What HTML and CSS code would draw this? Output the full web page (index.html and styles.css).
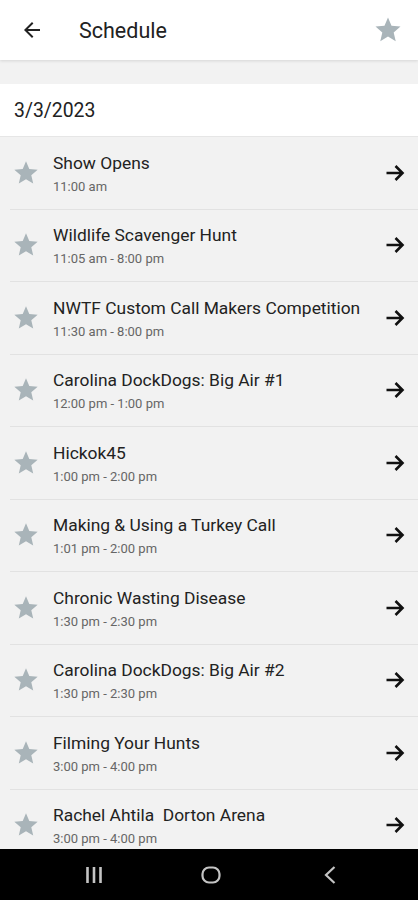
FILE: index.html
```html
<!DOCTYPE html>
<html lang="en">
<head>
  <meta charset="UTF-8">
  <meta name="viewport" content="width=device-width, initial-scale=1.0">
  <title>Schedule</title>
  <link rel="stylesheet" href="styles.css">
</head>
<body>
  <header class="topbar">
    <svg class="back" viewBox="0 0 24 24" width="24" height="24"><path d="M20 11H7.83l5.59-5.59L12 4l-8 8 8 8 1.41-1.41L7.83 13H20v-2z" fill="#222"/></svg>
    <h1>Schedule</h1>
    <svg class="fav" viewBox="0 0 24 24" width="30" height="30"><path d="M12 17.27L18.18 21l-1.64-7.03L22 9.24l-7.19-.61L12 2 9.19 8.63 2 9.24l5.46 4.73L5.82 21z" fill="#a9b4b9"/></svg>
  </header>

  <div class="spacer"></div>

  <div class="date">3/3/2023</div>

  <ul class="events">
    <li class="event">
      <svg class="star" viewBox="0 0 24 24"><path d="M12 17.27L18.18 21l-1.64-7.03L22 9.24l-7.19-.61L12 2 9.19 8.63 2 9.24l5.46 4.73L5.82 21z"/></svg>
      <div class="info"><div class="name">Show Opens</div><div class="time">11:00 am</div></div>
      <svg class="go" viewBox="0 0 20 20"><path d="M1.5 10H17M10.5 3l7 7-7 7"/></svg>
    </li>
    <li class="event">
      <svg class="star" viewBox="0 0 24 24"><path d="M12 17.27L18.18 21l-1.64-7.03L22 9.24l-7.19-.61L12 2 9.19 8.63 2 9.24l5.46 4.73L5.82 21z"/></svg>
      <div class="info"><div class="name">Wildlife Scavenger Hunt</div><div class="time">11:05 am - 8:00 pm</div></div>
      <svg class="go" viewBox="0 0 20 20"><path d="M1.5 10H17M10.5 3l7 7-7 7"/></svg>
    </li>
    <li class="event">
      <svg class="star" viewBox="0 0 24 24"><path d="M12 17.27L18.18 21l-1.64-7.03L22 9.24l-7.19-.61L12 2 9.19 8.63 2 9.24l5.46 4.73L5.82 21z"/></svg>
      <div class="info"><div class="name">NWTF Custom Call Makers Competition</div><div class="time">11:30 am - 8:00 pm</div></div>
      <svg class="go" viewBox="0 0 20 20"><path d="M1.5 10H17M10.5 3l7 7-7 7"/></svg>
    </li>
    <li class="event">
      <svg class="star" viewBox="0 0 24 24"><path d="M12 17.27L18.18 21l-1.64-7.03L22 9.24l-7.19-.61L12 2 9.19 8.63 2 9.24l5.46 4.73L5.82 21z"/></svg>
      <div class="info"><div class="name">Carolina DockDogs: Big Air #1</div><div class="time">12:00 pm - 1:00 pm</div></div>
      <svg class="go" viewBox="0 0 20 20"><path d="M1.5 10H17M10.5 3l7 7-7 7"/></svg>
    </li>
    <li class="event">
      <svg class="star" viewBox="0 0 24 24"><path d="M12 17.27L18.18 21l-1.64-7.03L22 9.24l-7.19-.61L12 2 9.19 8.63 2 9.24l5.46 4.73L5.82 21z"/></svg>
      <div class="info"><div class="name">Hickok45</div><div class="time">1:00 pm - 2:00 pm</div></div>
      <svg class="go" viewBox="0 0 20 20"><path d="M1.5 10H17M10.5 3l7 7-7 7"/></svg>
    </li>
    <li class="event">
      <svg class="star" viewBox="0 0 24 24"><path d="M12 17.27L18.18 21l-1.64-7.03L22 9.24l-7.19-.61L12 2 9.19 8.63 2 9.24l5.46 4.73L5.82 21z"/></svg>
      <div class="info"><div class="name">Making &amp; Using a Turkey Call</div><div class="time">1:01 pm - 2:00 pm</div></div>
      <svg class="go" viewBox="0 0 20 20"><path d="M1.5 10H17M10.5 3l7 7-7 7"/></svg>
    </li>
    <li class="event">
      <svg class="star" viewBox="0 0 24 24"><path d="M12 17.27L18.18 21l-1.64-7.03L22 9.24l-7.19-.61L12 2 9.19 8.63 2 9.24l5.46 4.73L5.82 21z"/></svg>
      <div class="info"><div class="name">Chronic Wasting Disease</div><div class="time">1:30 pm - 2:30 pm</div></div>
      <svg class="go" viewBox="0 0 20 20"><path d="M1.5 10H17M10.5 3l7 7-7 7"/></svg>
    </li>
    <li class="event">
      <svg class="star" viewBox="0 0 24 24"><path d="M12 17.27L18.18 21l-1.64-7.03L22 9.24l-7.19-.61L12 2 9.19 8.63 2 9.24l5.46 4.73L5.82 21z"/></svg>
      <div class="info"><div class="name">Carolina DockDogs: Big Air #2</div><div class="time">1:30 pm - 2:30 pm</div></div>
      <svg class="go" viewBox="0 0 20 20"><path d="M1.5 10H17M10.5 3l7 7-7 7"/></svg>
    </li>
    <li class="event">
      <svg class="star" viewBox="0 0 24 24"><path d="M12 17.27L18.18 21l-1.64-7.03L22 9.24l-7.19-.61L12 2 9.19 8.63 2 9.24l5.46 4.73L5.82 21z"/></svg>
      <div class="info"><div class="name">Filming Your Hunts</div><div class="time">3:00 pm - 4:00 pm</div></div>
      <svg class="go" viewBox="0 0 20 20"><path d="M1.5 10H17M10.5 3l7 7-7 7"/></svg>
    </li>
    <li class="event">
      <svg class="star" viewBox="0 0 24 24"><path d="M12 17.27L18.18 21l-1.64-7.03L22 9.24l-7.19-.61L12 2 9.19 8.63 2 9.24l5.46 4.73L5.82 21z"/></svg>
      <div class="info"><div class="name">Rachel Ahtila&nbsp; Dorton Arena</div><div class="time">3:00 pm - 4:00 pm</div></div>
      <svg class="go" viewBox="0 0 20 20"><path d="M1.5 10H17M10.5 3l7 7-7 7"/></svg>
    </li>
  </ul>

  <nav class="navbar">
    <svg viewBox="0 0 18 18" width="18" height="18"><path d="M2.5 1v16M9 1v16M15.5 1v16" stroke="#c4c4c4" stroke-width="2.6" fill="none"/></svg>
    <svg viewBox="0 0 20 18" width="20" height="18"><rect x="1.5" y="1.5" width="17" height="15" rx="6.5" stroke="#c4c4c4" stroke-width="2.2" fill="none"/></svg>
    <svg viewBox="0 0 14 20" width="14" height="20"><path d="M11.5 2L3 10l8.5 8" stroke="#c4c4c4" stroke-width="2.2" fill="none"/></svg>
  </nav>
</body>
</html>
```

FILE: styles.css
```css
body {
  margin: 0;
  font-family: Roboto, "Liberation Sans", sans-serif;
  background: #f2f2f2;
  color: #222;
  height: 900px;
  overflow: hidden;
  position: relative;
}
.topbar {
  height: 60px;
  background: #fff;
  display: flex;
  align-items: center;
  padding: 0 15px 0 20px;
  box-shadow: 0 1px 3px rgba(0, 0, 0, 0.12);
  position: relative;
}
.topbar h1 {
  flex: 1;
  margin: 0 0 0 35px;
  font-size: 21.5px;
  font-weight: 400;
  color: #222;
}
.spacer {
  height: 24px;
}
.date {
  height: 52px;
  background: #fff;
  display: flex;
  align-items: center;
  padding-left: 14px;
  font-size: 19.4px;
  color: #222;
  border-bottom: 1px solid #e6e6e6;
}
.events {
  list-style: none;
  margin: 0;
  padding: 0;
}
.event {
  height: 72.5px;
  box-sizing: border-box;
  display: flex;
  align-items: center;
  margin-left: 10px;
  border-bottom: 1px solid #e2e2e2;
}
.star {
  width: 28px;
  height: 28px;
  fill: #a9b4b9;
  margin-left: 2px;
}
.info {
  flex: 1;
  margin-left: 13px;
  padding-top: 2px;
}
.name {
  font-size: 17.4px;
  line-height: 20px;
  color: #222;
}
.time {
  font-size: 13px;
  line-height: 16px;
  color: #666;
  margin-top: 6px;
}
.go {
  width: 20px;
  height: 20px;
  fill: none;
  stroke: #111;
  stroke-width: 2.6;
  margin-right: 13px;
}
.navbar {
  position: absolute;
  left: 0;
  right: 0;
  bottom: 0;
  height: 51px;
  background: #000;
  display: flex;
  align-items: center;
  padding-left: 85px;
  gap: 98px;
}
.navbar svg:nth-child(3) {
  margin-left: 4px;
}
```
